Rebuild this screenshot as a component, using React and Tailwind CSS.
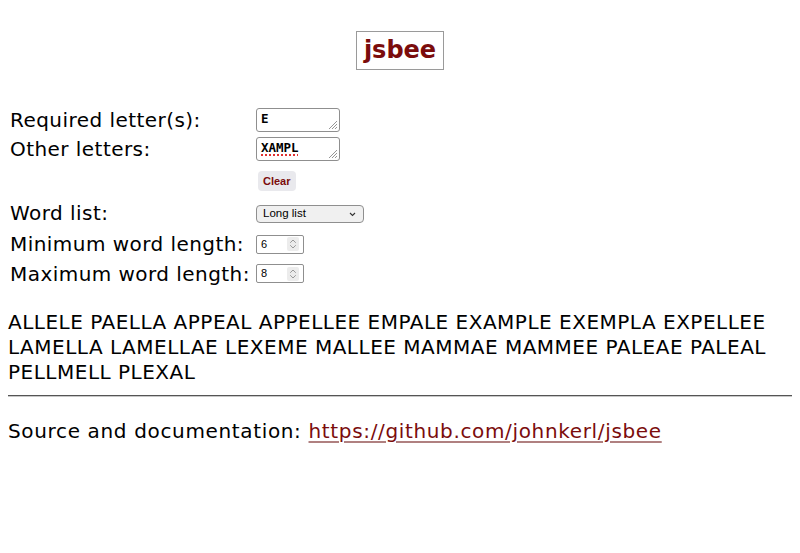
import React from "react";

function Spinner() {
  return (
    <div className="flex h-[14px] w-[12px] flex-col items-center justify-center rounded-[2px] bg-[#ececec]">
      <svg width="8" height="12" viewBox="0 0 8 12" fill="none" stroke="#9a9a9a" strokeWidth="1" strokeLinecap="round" strokeLinejoin="round">
        <path d="M1.5 4.5 L4 2 L6.5 4.5" />
        <path d="M1.5 7.5 L4 10 L6.5 7.5" />
      </svg>
    </div>
  );
}

function NumberBox({ value }) {
  return (
    <div className="flex h-[19px] w-[48px] items-center justify-between rounded-[2px] border border-[#8f8f8f] bg-white pl-[4px] pr-[4px] text-[11px] leading-none text-black [font-family:'Liberation_Sans',Arial,sans-serif]">
      <span>{value}</span>
      <Spinner />
    </div>
  );
}

function Grip() {
  return (
    <svg className="absolute bottom-[2px] right-[2px]" width="9" height="9" viewBox="0 0 9 9" stroke="#8a8a8a" strokeWidth="0.9">
      <line x1="1" y1="9" x2="9" y2="1" />
      <line x1="4" y1="9" x2="9" y2="4" />
      <line x1="7" y1="9" x2="9" y2="7" />
    </svg>
  );
}

function TextBox({ value, underline }) {
  return (
    <div className="relative h-[24px] w-[84px] rounded-[3px] border border-[#8f8f8f] bg-white pl-[4px] pt-[3px] text-[12.5px] font-bold leading-[14px] text-black [font-family:'DejaVu_Sans_Mono',monospace]">
      <span className={underline ? "underline decoration-dotted decoration-[#e03030] decoration-[1.5px] underline-offset-[3px]" : ""}>{value}</span>
      <Grip />
    </div>
  );
}

export default function App() {
  const labelCls = "text-[20px] leading-[24px] tracking-[0.45px] text-black";
  return (
    <div className="min-h-[553px] bg-white px-[8px] text-black [font-family:'DejaVu_Sans',Verdana,sans-serif]">
      <div className="flex justify-center pt-[31px]">
        <div className="border border-[#9a9a9a] px-[7px] py-[5px] text-[24px] font-bold leading-[27px] text-[#7b0c0c]">jsbee</div>
      </div>

      <div className="mt-[35px] grid grid-cols-[246px_auto] pl-[2px]">
        <div className="flex h-[29px] items-center"><span className={labelCls}>Required letter(s):</span></div>
        <div className="flex h-[29px] items-center"><TextBox value="E" /></div>

        <div className="flex h-[29px] items-center"><span className={labelCls}>Other letters:</span></div>
        <div className="flex h-[29px] items-center"><TextBox value="XAMPL" underline /></div>

        <div className="h-[36px]"></div>
        <div className="flex h-[36px] items-center pl-[2px]">
          <div className="flex h-[20px] items-center rounded-[4px] bg-[#e9e9ed] px-[5px] text-[11px] font-bold text-[#7b0c0c] [font-family:'Liberation_Sans',Arial,sans-serif]">Clear</div>
        </div>

        <div className="flex h-[30px] items-center"><span className={`${labelCls} -mt-[3px]`}>Word list:</span></div>
        <div className="flex h-[30px] items-center">
          <div className="flex h-[18px] w-[108px] items-center justify-between rounded-[4px] border border-[#8f8f8f] bg-[#f0f0f0] pl-[6px] pr-[7px] text-[11.5px] text-black [font-family:'Liberation_Sans',Arial,sans-serif]">
            <span>Long list</span>
            <svg width="7" height="5" viewBox="0 0 7 5" fill="none" stroke="#333" strokeWidth="1.1"><path d="M1 1 L3.5 3.5 L6 1" /></svg>
          </div>
        </div>

        <div className="flex h-[30px] items-center"><span className={labelCls}>Minimum word length:</span></div>
        <div className="flex h-[30px] items-center"><NumberBox value="6" /></div>

        <div className="flex h-[29px] items-center"><span className={labelCls}>Maximum word length:</span></div>
        <div className="flex h-[29px] items-center"><NumberBox value="8" /></div>
      </div>

      <p className="mt-[22px] text-[20px] leading-[25px] tracking-[0.5px]">
        ALLELE PAELLA APPEAL APPELLEE EMPALE EXAMPLE EXEMPLA EXPELLEE LAMELLA LAMELLAE LEXEME MALLEE MAMMAE MAMMEE PALEAE PALEAL PELLMELL PLEXAL
      </p>

      <div className="mt-[10px] border-t border-b border-t-[#555] border-b-[#c8c8c8]"></div>

      <p className="mt-[22px] text-[20px] leading-[25px] tracking-[0.65px]">
        Source and documentation:{" "}
        <a href="#" className="text-[#7b0c0c] underline decoration-[#b08080] underline-offset-[3px]">https://github.com/johnkerl/jsbee</a>
      </p>
    </div>
  );
}
